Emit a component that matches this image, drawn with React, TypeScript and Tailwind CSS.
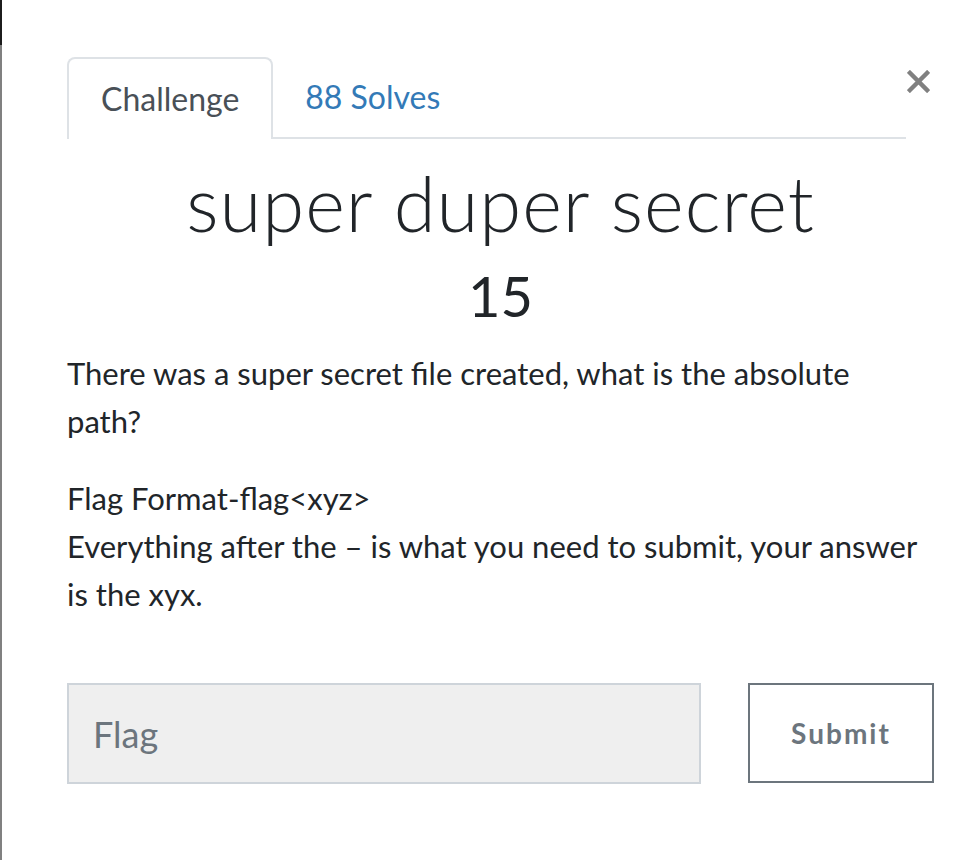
import React from "react";

const lato = { fontFamily: "Lato, 'Liberation Sans', sans-serif" };

function CloseIcon() {
  return (
    <svg width="23" height="23" viewBox="0 0 24 24" className="text-[#808080]">
      <path d="M3 3L21 21M21 3L3 21" stroke="currentColor" strokeWidth="4.5" strokeLinecap="square" />
    </svg>
  );
}

export default function App() {
  return (
    <div className="flex h-[860px] w-[976px] bg-white text-[#212529]" style={lato}>
      {/* edge of the page behind the modal */}
      <div className="flex w-[2px] flex-col">
        <div className="h-[45px] bg-[#1c1c1c]" />
        <div className="flex-1 bg-[#808080]" />
      </div>

      <div className="flex flex-1 flex-col pl-[65px] pr-[42px] pt-[57px]">
        <div className="flex items-start">
          <ul className="flex flex-1 border-b-2 border-[#dee2e6]">
            <li className="-mb-[2px] rounded-t-[8px] border-2 border-b-0 border-[#dee2e6] bg-white px-[32px] py-[16px] text-[32px] leading-[48px] text-[#495057]">
              Challenge
            </li>
            <li className="px-[32px] py-[16px] text-[32px] leading-[48px] text-[#337ab7]">88 Solves</li>
          </ul>
          <button className="mt-[13px] flex w-[28px] justify-end pr-[4px]">
            <CloseIcon />
          </button>
        </div>

        <h2 className="mt-[18px] text-center text-[76px] leading-[1.2] font-light tracking-[1px]">
          super duper secret
        </h2>
        <h3 className="mt-[14px] text-center text-[56px] leading-[1.2] font-normal">15</h3>

        <div className="mt-[20px] text-[31px] leading-[48px]">
          <p>
            There was a super secret file created, what is the absolute
            <br />
            path?
          </p>
          <p className="mt-[29px]">
            Flag Format-flag&lt;xyz&gt;
            <br />
            Everything after the – is what you need to submit, your answer
            <br />
            is the xyx.
          </p>
        </div>

        <form className="mt-[65px] flex gap-[47px]">
          <input
            placeholder="Flag"
            className="h-[101px] w-[634px] border-2 border-[#ced4da] bg-[#efefef] px-[24px] text-[36px] text-[#495057] placeholder:text-[#6c757d] outline-none"
          />
          <button
            type="button"
            className="h-[100px] w-[186px] border-2 border-[#6c757d] bg-white text-[28px] font-bold tracking-[2px] text-[#6c757d]"
          >
            Submit
          </button>
        </form>
      </div>
    </div>
  );
}
